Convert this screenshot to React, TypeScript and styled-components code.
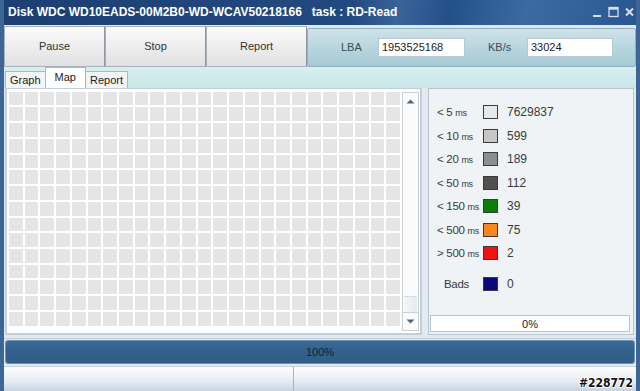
import React from "react";
import styled, { createGlobalStyle } from "styled-components";

const GlobalStyle = createGlobalStyle`
  html, body {
    margin: 0;
    padding: 0;
    background: #ffffff;
  }
  body {
    font-family: "Liberation Sans", Arial, sans-serif;
    font-size: 11px;
    color: #202020;
  }
`;

export const Window = styled.div`
  width: 640px;
  height: 391px;
  display: flex;
  flex-direction: column;
  background: #e3eaf1;
  box-sizing: border-box;
  border-left: 4px solid #3d6595;
  border-right: 4px solid #3d6595;
  position: relative;
  overflow: hidden;
`;

export const TitleBar = styled.div`
  height: 25px;
  margin: 0 -4px;
  padding: 0 8px;
  display: flex;
  align-items: center;
  justify-content: space-between;
  background: linear-gradient(100deg, #1d3f72 0%, #224a80 55%, #3a659a 62%, #24508a 70%, #3b6aa0 82%, #2a5690 100%);
  color: #ffffff;
  font-weight: bold;
  font-size: 12px;
`;

export const TitleText = styled.span`
  white-space: pre;
`;

export const Controls = styled.div`
  display: flex;
  align-items: center;
  gap: 6px;
  color: #d4e0ee;
  margin-right: -2px;
`;

export const Toolbar = styled.div`
  height: 42px;
  display: flex;
  align-items: stretch;
  padding-top: 1px;
  box-sizing: border-box;
  background: linear-gradient(#dfe9f0, #c5dbe3);
`;

export const ToolButton = styled.button`
  width: 101px;
  border: 1px solid #a9b2bb;
  border-right-color: #8e98a2;
  background: linear-gradient(#fbfbfb 0%, #eeeeee 50%, #e0e0e0 100%);
  font-family: "Liberation Sans", Arial, sans-serif;
  font-size: 11px;
  color: #333;
  padding: 0;
  margin: 0;
`;

export const InfoPanel = styled.div`
  flex: 1;
  margin-top: 2px;
  display: flex;
  align-items: center;
  border: 1px solid #8fb0c2;
  border-radius: 2px;
  background: linear-gradient(#cfe2ea 0%, #b4d3dc 60%, #a6cad4 100%);
  padding-left: 33px;
`;

export const InfoLabel = styled.span<{ $w: number }>`
  width: ${(p) => p.$w}px;
  color: #3c4a56;
  font-size: 11px;
`;

export const InfoInput = styled.div<{ $w: number }>`
  width: ${(p) => p.$w}px;
  height: 19px;
  box-sizing: border-box;
  background: #ffffff;
  border: 1px solid #b8c8d2;
  padding: 2px 3px;
  font-size: 11px;
  color: #222;
`;

export const TabsRow = styled.div`
  height: 21px;
  display: flex;
  align-items: flex-end;
  padding-left: 1px;
  background: linear-gradient(#d9efef, #c8e6e8);
`;

export const Tab = styled.div<{ $active?: boolean }>`
  height: ${(p) => (p.$active ? 21 : 17)}px;
  padding: 0 ${(p) => (p.$active ? 9 : 4)}px;
  box-sizing: border-box;
  display: flex;
  align-items: ${(p) => (p.$active ? "flex-start" : "center")};
  padding-top: ${(p) => (p.$active ? 3 : 0)}px;
  border: 1px solid #a9b9c4;
  border-bottom: none;
  margin-right: -1px;
  background: ${(p) => (p.$active ? "#ffffff" : "#f2f4f6")};
  font-size: 11px;
  color: #222;
  position: relative;
  z-index: ${(p) => (p.$active ? 1 : 0)};
`;

export const Main = styled.div`
  height: 249px;
  display: flex;
  gap: 6px;
  padding: 0 0 0 1px;
`;

export const MapBox = styled.div`
  width: 417px;
  box-sizing: border-box;
  background: #ffffff;
  border: 2px solid #c3cfd9;
  border-top-width: 1px;
  display: flex;
  padding: 3px 1px 2px 2px;
  gap: 2px;
`;

export const Grid = styled.div`
  width: 392px;
  height: 234px;
  display: grid;
  grid-template-columns: repeat(25, 1fr);
  grid-template-rows: repeat(15, 1fr);
  gap: 2px;
`;

export const Cell = styled.div`
  background: #e5e5e5;
`;

export const ScrollBar = styled.div`
  width: 17px;
  box-sizing: border-box;
  border: 1px solid #c9d0d6;
  background: #fbfbfb;
  display: flex;
  flex-direction: column;
`;

export const ScrollArrow = styled.div<{ $bordered?: boolean }>`
  height: 17px;
  display: flex;
  align-items: center;
  justify-content: center;
  border-top: ${(p) => (p.$bordered ? "1px solid #c9d0d6" : "none")};
`;

export const ScrollTrack = styled.div`
  flex: 1;
  display: flex;
  flex-direction: column;
  justify-content: flex-end;
`;

export const Thumb = styled.div`
  height: 15px;
  margin: 0 1px;
  border-top: 1px solid #d6dbe0;
  background: linear-gradient(90deg, #f4f6f8, #e6eaee);
`;

export const LegendPanel = styled.div`
  width: 206px;
  box-sizing: border-box;
  border: 1px solid #b8c5cf;
  background: #f0f3f6;
  display: flex;
  flex-direction: column;
  padding: 1px;
`;

export const LegendList = styled.div`
  flex: 1;
  padding: 11px 0 0 7px;
  display: flex;
  flex-direction: column;
`;

export const LegendRow = styled.div<{ $gap?: number }>`
  height: 23.5px;
  display: flex;
  align-items: center;
  margin-top: ${(p) => p.$gap || 0}px;
`;

export const LegendLabel = styled.span<{ $center?: boolean }>`
  width: 46px;
  flex: none;
  font-size: 11.5px;
  letter-spacing: -0.3px;
  color: #3a3a3a;
  padding-left: ${(p) => (p.$center ? 7 : 0)}px;
  box-sizing: border-box;
  white-space: nowrap;
  overflow: hidden;
`;

export const Unit = styled.span`
  font-size: 9px;
`;

export const Swatch = styled.div<{ $color: string }>`
  width: 15px;
  height: 14px;
  flex: none;
  box-sizing: border-box;
  border: 1px solid #3a3a3a;
  background: ${(p) => p.$color};
  margin-right: 9px;
`;

export const LegendValue = styled.span`
  font-size: 12px;
  color: #3a3a3a;
`;

export const PercentBox = styled.div`
  height: 17px;
  margin: 0 2px 1px 0;
  box-sizing: border-box;
  border: 1px solid #b8c5cf;
  background: #ffffff;
  display: flex;
  align-items: center;
  justify-content: center;
  font-size: 11px;
  color: #222;
`;

export const ProgressFrame = styled.div`
  margin-top: 3px;
  height: 27px;
  padding: 1px;
  box-sizing: border-box;
  border-top: 1px solid #c0ccd8;
`;

export const ProgressBar = styled.div`
  height: 100%;
  border-radius: 4px;
  background: linear-gradient(#3d6c97, #32618c 40%, #2f5d88);
  box-shadow: inset 0 0 0 1px #6f92b3;
  display: flex;
  align-items: center;
  justify-content: center;
  font-size: 11px;
  color: #0f2238;
`;

export const StatusBar = styled.div`
  height: 24px;
  margin: 1px -4px 0;
  display: flex;
  background: linear-gradient(#fdfdfe, #e6ecf2 60%, #c7d3df);
  border-top: 1px solid #c4cfd9;
`;

export const StatusCell = styled.div<{ $w?: number }>`
  width: ${(p) => (p.$w ? `${p.$w}px` : "auto")};
  flex: ${(p) => (p.$w ? "none" : 1)};
  border-right: 1px solid #a9b6c2;
  &:last-child {
    border-right: none;
  }
`;

export const Watermark = styled.div`
  position: absolute;
  right: 3px;
  bottom: 1px;
  font-family: "DejaVu Sans Condensed", "Liberation Sans", sans-serif;
  font-weight: bold;
  font-size: 12px;
  color: #111;
  text-shadow: 1px 0 #fff, -1px 0 #fff, 0 1px #fff, 0 -1px #fff;
`;

const legend = [
  { label: "< 5", color: "#e8e8e8", value: "7629837" },
  { label: "< 10", color: "#c6c6c6", value: "599" },
  { label: "< 20", color: "#8e8e8e", value: "189" },
  { label: "< 50", color: "#505050", value: "112" },
  { label: "< 150", color: "#0a7f0a", value: "39" },
  { label: "< 500", color: "#f8861e", value: "75" },
  { label: "> 500", color: "#f21010", value: "2" },
];

const cells = Array.from({ length: 25 * 15 });

export default function App() {
  return (
    <>
      <GlobalStyle />
      <Window>
        <TitleBar>
          <TitleText>Disk WDC WD10EADS-00M2B0-WD-WCAV50218166   task : RD-Read</TitleText>
          <Controls>
            <svg width="10" height="12" viewBox="0 0 10 12">
              <rect x="1" y="9" width="8" height="2" fill="currentColor" />
            </svg>
            <svg width="11" height="12" viewBox="0 0 11 12">
              <rect x="1" y="1.5" width="9" height="9" fill="none" stroke="currentColor" strokeWidth="1.3" />
              <rect x="1" y="1.5" width="9" height="2.2" fill="currentColor" />
            </svg>
            <svg width="9" height="12" viewBox="0 0 9 12">
              <path d="M1 2.5 L8 9.5 M8 2.5 L1 9.5" stroke="currentColor" strokeWidth="2" />
            </svg>
          </Controls>
        </TitleBar>

        <Toolbar>
          <ToolButton>Pause</ToolButton>
          <ToolButton>Stop</ToolButton>
          <ToolButton>Report</ToolButton>
          <InfoPanel>
            <InfoLabel $w={37}>LBA</InfoLabel>
            <InfoInput $w={87}>1953525168</InfoInput>
            <InfoLabel $w={23} />
            <InfoLabel $w={39}>KB/s</InfoLabel>
            <InfoInput $w={86}>33024</InfoInput>
          </InfoPanel>
        </Toolbar>

        <TabsRow>
          <Tab>Graph</Tab>
          <Tab $active>Map</Tab>
          <Tab>Report</Tab>
        </TabsRow>

        <Main>
          <MapBox>
            <Grid>
              {cells.map((_, i) => (
                <Cell key={i} />
              ))}
            </Grid>
            <ScrollBar>
              <ScrollArrow>
                <svg width="9" height="5" viewBox="0 0 9 5">
                  <path d="M0.5 4.5 L4.5 0.5 L8.5 4.5 Z" fill="#5a6570" />
                </svg>
              </ScrollArrow>
              <ScrollTrack>
                <Thumb />
              </ScrollTrack>
              <ScrollArrow $bordered>
                <svg width="9" height="5" viewBox="0 0 9 5">
                  <path d="M0.5 0.5 L4.5 4.5 L8.5 0.5 Z" fill="#5a6570" />
                </svg>
              </ScrollArrow>
            </ScrollBar>
          </MapBox>

          <LegendPanel>
            <LegendList>
              {legend.map((l) => (
                <LegendRow key={l.label}>
                  <LegendLabel>
                    {l.label} <Unit>ms</Unit>
                  </LegendLabel>
                  <Swatch $color={l.color} />
                  <LegendValue>{l.value}</LegendValue>
                </LegendRow>
              ))}
              <LegendRow $gap={7}>
                <LegendLabel $center>Bads</LegendLabel>
                <Swatch $color="#0b0a78" />
                <LegendValue>0</LegendValue>
              </LegendRow>
            </LegendList>
            <PercentBox>0%</PercentBox>
          </LegendPanel>
        </Main>

        <ProgressFrame>
          <ProgressBar>100%</ProgressBar>
        </ProgressFrame>

        <StatusBar>
          <StatusCell $w={293} />
          <StatusCell />
        </StatusBar>
        <Watermark>#228772</Watermark>
      </Window>
    </>
  );
}
